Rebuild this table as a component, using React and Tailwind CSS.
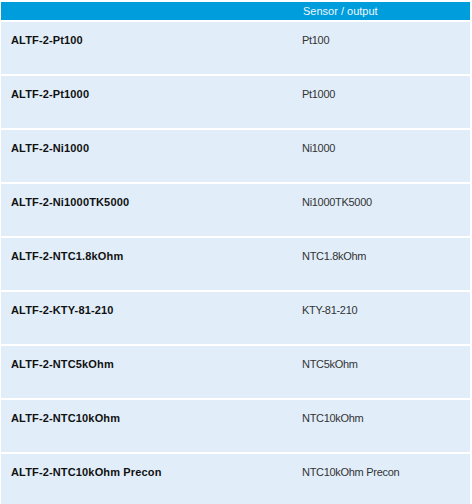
import React from "react";

const rows = [
  ["ALTF-2-Pt100", "Pt100"],
  ["ALTF-2-Pt1000", "Pt1000"],
  ["ALTF-2-Ni1000", "Ni1000"],
  ["ALTF-2-Ni1000TK5000", "Ni1000TK5000"],
  ["ALTF-2-NTC1.8kOhm", "NTC1.8kOhm"],
  ["ALTF-2-KTY-81-210", "KTY-81-210"],
  ["ALTF-2-NTC5kOhm", "NTC5kOhm"],
  ["ALTF-2-NTC10kOhm", "NTC10kOhm"],
  ["ALTF-2-NTC10kOhm Precon", "NTC10kOhm Precon"],
];

export default function App() {
  return (
    <div className="w-[472px] h-[504px] overflow-hidden bg-white pl-[1px] pr-[2px] pt-[2px] font-['Liberation_Sans',Arial,sans-serif] text-[11px]">
      <div className="flex flex-col gap-[2px]">
        <div className="grid grid-cols-[291px_1fr] h-[18px] bg-[#009ddc] leading-[18px] text-[#eef7fc]">
          <div className="pl-[10px]"></div>
          <div className="pl-[11px]">Sensor / output</div>
        </div>
        {rows.map(([name, sensor]) => (
          <div key={name} className="grid grid-cols-[291px_1fr] h-[52px] shrink-0 bg-[#e1eefa] pt-[10px] leading-[16px]">
            <div className="pl-[10px] font-bold text-[#111] tracking-[0.15px]">{name}</div>
            <div className="pl-[10px] text-[#333] tracking-[-0.3px]">{sensor}</div>
          </div>
        ))}
      </div>
    </div>
  );
}
